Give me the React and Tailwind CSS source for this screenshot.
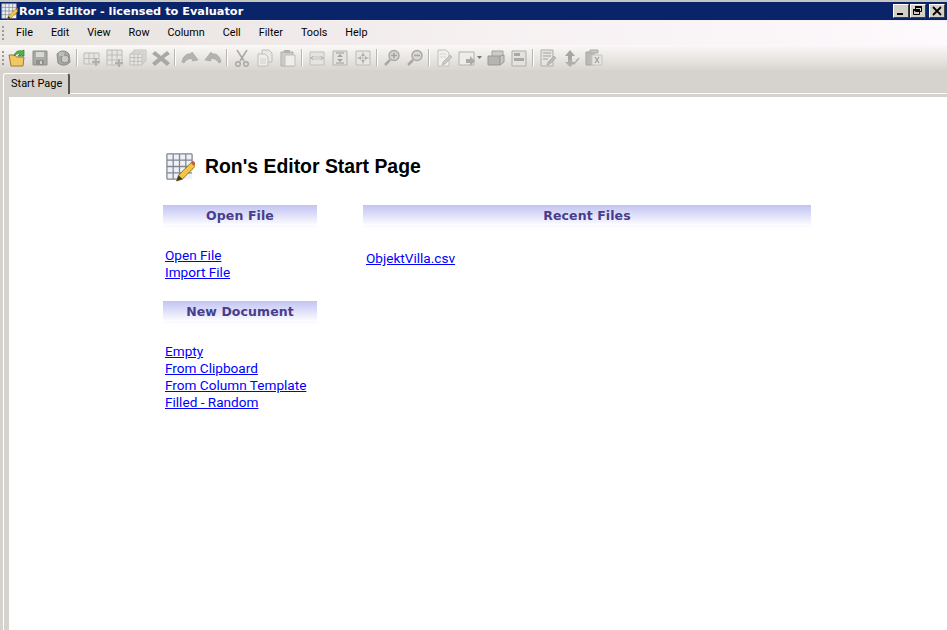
import React from 'react'

const menus = ['File', 'Edit', 'View', 'Row', 'Column', 'Cell', 'Filter', 'Tools', 'Help']

const Grid = ({ x = 2, y = 3, w = 14, h = 12, cols = 3, rows = 3 }) => {
  const lines = []
  for (let i = 0; i <= cols; i++) lines.push(<path key={'c' + i} d={`M${x + (w * i) / cols} ${y}V${y + h}`} />)
  for (let i = 0; i <= rows; i++) lines.push(<path key={'r' + i} d={`M${x} ${y + (h * i) / rows}H${x + w}`} />)
  return <g stroke="#bcbcb8" fill="none">{lines}</g>
}

const icons = {
  open: (
    <>
      <path d="M1 6h6l1.500 2H16l-1 9H3z" fill="#f2c766" stroke="#a5782d" />
      <path d="M6 7c1-4 4-6 8-5l2-1v6h-6l2-2c-2-1-4 0-6 2z" fill="#4fb548" stroke="#2b7f2a" strokeWidth=".7" />
    </>
  ),
  save: (
    <>
      <path d="M2 2h14v14H2z" fill="#a9a9a5" stroke="#8d8d8a" />
      <path d="M5 3h8v5H5z" fill="#d8d8d4" />
      <path d="M5 11h8v5H5z" fill="#8e8e8b" />
      <path d="M9 12h2v3H9z" fill="#cfcfcb" />
    </>
  ),
  saveAll: (
    <>
      <path d="M3 5c3-4 9-4 12 0l1 8c-3 4-9 4-12 1z" fill="#a7a7a4" stroke="#8b8b88" />
      <circle cx="11" cy="10" r="4" fill="#c9c9c5" stroke="#8b8b88" />
      <path d="M5 3h5v4H5z" fill="#bdbdb9" />
    </>
  ),
  addRow: (
    <>
      <path d="M1 4h15v11H1z" fill="#e6e5e1" />
      <Grid x={1} y={4} w={15} h={11} cols={3} rows={2} />
      <path d="M12 9h2v3h3v2h-3v3h-2v-3H9v-2h3z" fill="#b0b0ac" />
    </>
  ),
  addCol: (
    <>
      <path d="M1 1h15v15H1z" fill="#e6e5e1" />
      <Grid x={1} y={1} w={15} h={15} cols={3} rows={3} />
      <path d="M12 10h2v3h3v2h-3v3h-2v-3H9v-2h3z" fill="#b0b0ac" />
    </>
  ),
  table: (
    <>
      <path d="M5 1h12v11H5z" fill="#e3e2de" stroke="#c4c4c0" />
      <path d="M3 3h12v11H3z" fill="#e3e2de" stroke="#c4c4c0" />
      <path d="M1 5h12v11H1z" fill="#e9e8e4" />
      <Grid x={1} y={5} w={12} h={11} cols={3} rows={3} />
    </>
  ),
  remove: <path d="M3 2l6 5 6-5 3 3-6 4 6 5-3 3-6-5-6 5-3-3 6-5-6-4z" fill="#a8a8a5" />,
  undo: <path d="M1 13c1-6 5-9 9-8l1-2 6 8-6 1 1-2c-3-1-7 0-9 4z" fill="#b3b3b0" stroke="#a0a09d" strokeWidth=".6" />,
  redo: <path d="M17 13c-1-6-5-9-9-8L7 3l-6 8 6 1-1-2c3-1 7 0 9 4z" fill="#b3b3b0" stroke="#a0a09d" strokeWidth=".6" />,
  cut: (
    <g fill="none" stroke="#a8a8a5" strokeWidth="1.500">
      <path d="M4 1l7 11M14 1L7 12" />
      <circle cx="5" cy="15" r="2.300" />
      <circle cx="13" cy="15" r="2.300" />
    </g>
  ),
  copy: (
    <>
      <path d="M6 1h7l3 3v9H6z" fill="#e9e8e4" stroke="#bebeba" />
      <path d="M2 5h7l3 3v9H2z" fill="#efeeea" stroke="#bebeba" />
      <path d="M4 10h6M4 12h6M4 14h6" stroke="#d0d0cc" />
    </>
  ),
  paste: (
    <>
      <path d="M2 3h12v14H2z" fill="#cdccc8" stroke="#adadaa" />
      <path d="M5 1h6v3H5z" fill="#b2b1ad" />
      <path d="M6 6h10v11H6z" fill="#efeeea" stroke="#bebeba" />
    </>
  ),
  fit1: (
    <>
      <path d="M2 3h14v13H2z" fill="#e5e4e0" stroke="#c0c0bc" />
      <path d="M2 9h14M5 7L3 9l2 2M13 7l2 2-2 2" stroke="#b2b2ae" fill="none" />
      <path d="M5 7h8v4H5z" fill="#d4d4d0" />
    </>
  ),
  fit2: (
    <>
      <path d="M2 2h14v14H2z" fill="#e5e4e0" stroke="#b2b2ae" />
      <path d="M5 4h8M5 14h8" stroke="#989895" />
      <path d="M9 5l3 3H6zM9 13l3-3H6z" fill="#a3a3a0" />
    </>
  ),
  fit3: (
    <>
      <path d="M2 2h14v14H2z" fill="#e8e7e3" stroke="#bbbbb7" />
      <path d="M9 3v12M3 9h12" stroke="#c4c4c0" />
      <path d="M9 4l2 3H7zM9 14l2-3H7zM4 9l3-2v4zM14 9l-3-2v4z" fill="#aeaeab" />
    </>
  ),
  zoomIn: (
    <>
      <path d="M2 16l5-5" stroke="#a8a7a4" strokeWidth="2.500" />
      <circle cx="11" cy="6.500" r="5" fill="#d9d8d4" stroke="#a8a7a4" strokeWidth="1.400" />
      <path d="M8 6.500h6M11 3.500v6" stroke="#a2a29f" strokeWidth="1.500" />
    </>
  ),
  zoomOut: (
    <>
      <path d="M2 16l5-5" stroke="#a8a7a4" strokeWidth="2.500" />
      <circle cx="11" cy="6.500" r="5" fill="#d9d8d4" stroke="#a8a7a4" strokeWidth="1.400" />
      <path d="M8 6.500h6" stroke="#a2a29f" strokeWidth="1.500" />
    </>
  ),
  edit: (
    <>
      <path d="M3 1h8l3 3v13H3z" fill="#f1f0ec" stroke="#c0c0bc" />
      <path d="M5 5h6M5 8h6" stroke="#d4d4d0" />
      <path d="M7 16l1-3 7-7 2 2-7 7z" fill="#c8c7c3" stroke="#ababa8" strokeWidth=".6" />
    </>
  ),
  exportDoc: (
    <>
      <path d="M1 3h15v13H1z" fill="#eeede9" stroke="#b2b2ae" />
      <path d="M8 10h4V7l5 5-5 5v-3H8z" fill="#ababa8" />
    </>
  ),
  box: (
    <>
      <path d="M5 2h11v6H5z" fill="#cccbc7" stroke="#a3a3a0" />
      <path d="M1 7h12v9H1z" fill="#b5b5b1" stroke="#9a9896" />
      <path d="M13 7l4-1v7l-4 3z" fill="#c8c7c3" stroke="#9a9896" />
    </>
  ),
  sheet: (
    <>
      <path d="M2 2h14v15H2z" fill="#e3e2de" stroke="#adadA9" />
      <path d="M4 4h6v3H4zM4 9h10v3H4z" fill="#a8a8a5" />
    </>
  ),
  notes: (
    <>
      <path d="M2 1h12v16H2z" fill="#e5e4e0" stroke="#adada9" />
      <path d="M4 4h8M4 7h8M4 10h5" stroke="#a2a29f" />
      <path d="M8 16l1-3 6-6 2 2-6 6z" fill="#bbbab6" stroke="#9a9a98" strokeWidth=".5" />
    </>
  ),
  sort: (
    <>
      <path d="M8 1l5 6h-3v4H6V7H3z" fill="#a6a6a3" />
      <path d="M6 11h4v2h3l-5 5-5-5h3z" fill="#b0afac" />
      <path d="M10 13l2 2 5-6" stroke="#b0afac" strokeWidth="1.500" fill="none" />
    </>
  ),
  excel: (
    <>
      <path d="M1 3h8v13H1z" fill="#bbbab6" stroke="#a5a5a2" />
      <path d="M5 1h8v3H5z" fill="#c8c7c3" stroke="#ababa8" />
      <path d="M7 6h10v10H7z" fill="#e5e4e0" stroke="#c6c6c2" />
      <path d="M10 8l4 6M14 8l-4 6" stroke="#a2a29f" strokeWidth="1.300" />
    </>
  )
}

const toolbar = [
  ['open', 'save', 'saveAll'],
  ['addRow', 'addCol', 'table', 'remove'],
  ['undo', 'redo'],
  ['cut', 'copy', 'paste'],
  ['fit1', 'fit2', 'fit3'],
  ['zoomIn', 'zoomOut'],
  ['edit', 'exportDoc', 'box', 'sheet'],
  ['notes', 'sort', 'excel']
]

const Grip = () => (
  <div className="flex flex-col gap-[2px] w-[3px] ml-[2px]">
    {[0, 1, 2, 3].map((i) => (
      <div key={i} className="w-[2px] h-[2px] bg-[#9c9a94]" />
    ))}
  </div>
)

const AppIcon = ({ size = 18 }) => (
  <svg width={size} height={size} viewBox="0 0 32 32" className="shrink-0">
    <path d="M3 3h26v26H3z" fill="#eef1f7" />
    <path d="M3 3h26M3 9.500h26M3 16h26M3 22.500h26M3 29h16M3 3v26M9.500 3v26M16 3v26M22.500 3v18M29 3v16" stroke="#80878f" strokeWidth="1.300" fill="none" />
    <path d="M13 31l2-6 13-13 4 4-13 13z" fill="#f4c542" stroke="#7a5b16" strokeWidth=".8" />
    <path d="M28 12l2-2 2.500 2.500-1 3z" fill="#d2503f" />
    <path d="M13 31l2-6 4 4z" fill="#3a3a2e" />
  </svg>
)

const WinButton = ({ children }) => (
  <div className="w-[16px] h-[14px] bg-[#d4d0c8] border-t border-l border-white border-r border-b border-r-[#404040] border-b-[#404040] flex items-center justify-center">
    <svg width="12" height="10" viewBox="0 0 12 10">{children}</svg>
  </div>
)

const Section = ({ children }) => (
  <div className="h-[22px] pt-[2px] flex items-center justify-center bg-gradient-to-b from-[#c3c3f3] to-[#ffffff] border-b border-[#f6f6fc] text-[#483d8b] text-[12.500px] font-bold tracking-[0.1px] font-['DejaVu_Sans',sans-serif]">
    {children}
  </div>
)

const Link = ({ children }) => (
  <a href="#" className="block h-[17px] leading-[17px] text-[#0000ff] underline text-[13.600px] w-fit whitespace-nowrap">
    {children}
  </a>
)

export default function App() {
  return (
    <div className="w-[947px] h-[630px] overflow-hidden flex flex-col bg-[#d6d3ce] font-['Roboto',sans-serif] text-[11px] text-black">
      {/* title bar */}
      <div className="h-[20px] shrink-0 bg-[#0a246a] border-t-2 border-[#c8c6c0] flex items-center pr-[2px] text-white font-bold">
        <AppIcon />
        <span className="ml-[1px] pt-[1px] font-['DejaVu_Sans',sans-serif] text-[11.300px] leading-none">Ron's Editor - licensed to Evaluator</span>
        <div className="ml-auto flex">
          <WinButton>
            <path d="M2 7h6v2H2z" fill="#000" />
          </WinButton>
          <div className="ml-[1px]">
            <WinButton>
              <path d="M3.500 .5h6v5h-6zM1.500 3.500h6v5h-6z" fill="none" stroke="#000" />
              <path d="M3 0h7v2H3zM1 3h7v2H1z" fill="#000" />
            </WinButton>
          </div>
          <div className="ml-[3px]">
            <WinButton>
              <path d="M2 1l8 8M10 1l-8 8" stroke="#000" strokeWidth="1.800" />
            </WinButton>
          </div>
        </div>
      </div>

      {/* menu bar */}
      <div className="h-[25px] shrink-0 flex items-center bg-gradient-to-r from-[#e6e2de] via-[#f6f0f1] to-[#fdf9fc] border-t border-[#f4f1ef]">
        <Grip />
        <div className="flex gap-[18px] ml-[11px] pt-[1px] text-[10.800px]">
          {menus.map((m) => (
            <span key={m}>{m}</span>
          ))}
        </div>
      </div>

      {/* toolbar */}
      <div className="h-[25px] shrink-0 flex items-center bg-gradient-to-b from-[#fbf8f9] to-[#d9d6d1]">
        <Grip />
        <div className="flex items-center">
          {toolbar.map((group, i) => (
            <div key={i} className="flex items-center">
              {i > 0 && <div className="w-px h-[17px] bg-[#b9b7b1] mx-[2px] border-r border-white box-content" />}
              {group.map((name) => (
                <div key={name} className={`${name === 'exportDoc' ? 'w-[29px] pl-[3px] justify-start' : 'w-[23px] justify-center'} h-[22px] flex items-center`}>
                  <svg width="18" height="18" viewBox="0 0 18 18">{icons[name]}</svg>
                  {name === 'exportDoc' && (
                    <svg width="5" height="3" viewBox="0 0 5 3" className="ml-[1px]">
                      <path d="M0 0h5L2.500 3z" fill="#777" />
                    </svg>
                  )}
                </div>
              ))}
            </div>
          ))}
        </div>
      </div>

      {/* tabs */}
      <div className="flex-1 flex flex-col pl-[3px]">
        <div className="h-[23px] shrink-0 flex items-end">
          <div className="relative z-10 w-[67px] h-[21px] -mb-px bg-[#d6d3ce] border-t border-l border-white border-r-2 border-r-[#555] rounded-tl-[3px] rounded-tr-[3px] flex items-center pl-[7px]">
            Start Page
          </div>
        </div>
        <div className="flex-1 flex flex-col border-l border-t border-white pt-[3px] pl-[5px]">
          <div className="flex-1 bg-white pl-[154px] pt-[54px]">
            <div className="flex items-center gap-[10px] pl-[1px]">
              <AppIcon size={31} />
              <h1 className="font-['Liberation_Sans',sans-serif] font-bold text-[19.400px] leading-none">Ron's Editor Start Page</h1>
            </div>
            <div className="flex gap-[46px] mt-[23px]">
              <div className="w-[154px]">
                <Section>Open File</Section>
                <div className="pl-[2px] pt-[20px]">
                  <Link>Open File</Link>
                  <Link>Import File</Link>
                </div>
                <div className="mt-[20px]">
                  <Section>New Document</Section>
                </div>
                <div className="pl-[2px] pt-[20px]">
                  <Link>Empty</Link>
                  <Link>From Clipboard</Link>
                  <Link>From Column Template</Link>
                  <Link>Filled - Random</Link>
                </div>
              </div>
              <div className="w-[448px]">
                <Section>Recent Files</Section>
                <div className="pl-[3px] pt-[23px]">
                  <Link>ObjektVilla.csv</Link>
                </div>
              </div>
            </div>
          </div>
        </div>
      </div>
    </div>
  )
}
